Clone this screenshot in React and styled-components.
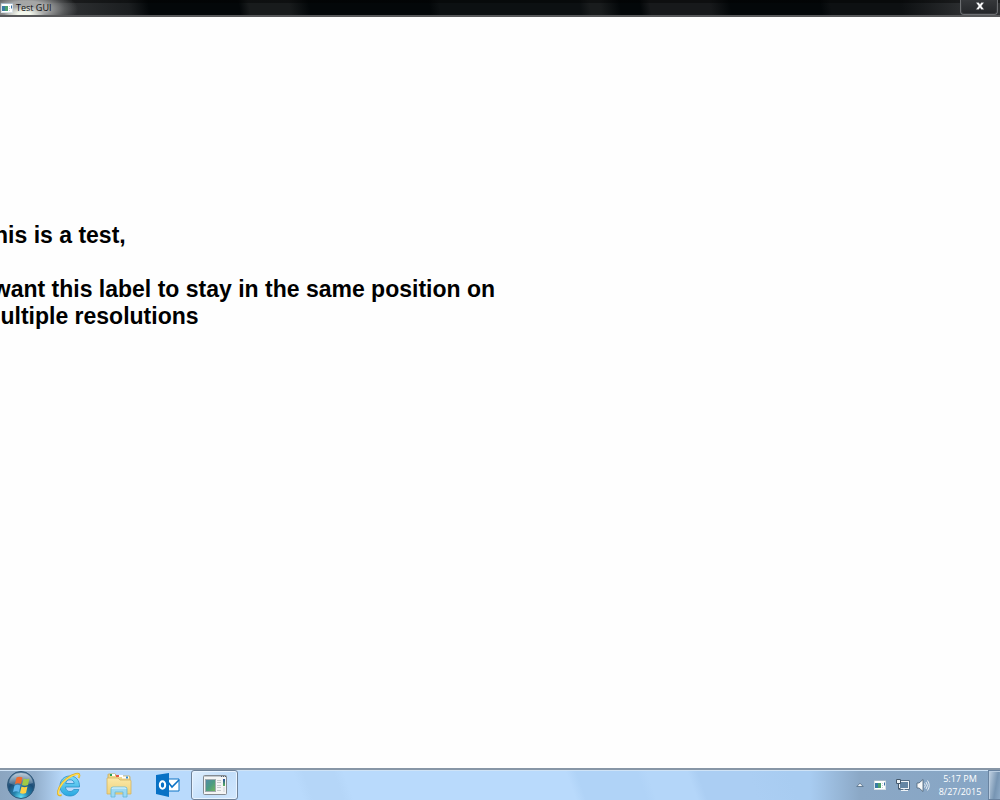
import React from 'react';
import styled, { createGlobalStyle } from 'styled-components';

const GlobalStyle = createGlobalStyle`
  * {
    box-sizing: border-box;
  }

  body {
    margin: 0;
    background: #fefefe;
    font-family: "Open Sans", "Noto Sans", sans-serif;
  }
`;

const Desktop = styled.div`
  min-height: 100vh;
  display: flex;
  flex-direction: column;
  overflow: hidden;
`;

const TitleBar = styled.header`
  height: 17px;
  display: flex;
  align-items: flex-start;
  justify-content: space-between;
  border-bottom: 2px solid #57585a;
  background:
    linear-gradient(180deg, #00000066 0 3px, transparent 3px),
    linear-gradient(80deg, #303234 6%, #1b1e20 13%, transparent 15% 24%, #181b1c 25% 29%, transparent 31% 43%, #0c1012 44% 58%, #191c1d 59% 60%, transparent 62% 64%, #17191b 65% 71%, transparent 73% 82%, #0d1012 83% 90%, #303234 97%),
    #030709;
`;

const Caption = styled.div`
  height: 15px;
  width: 80px;
  display: flex;
  align-items: center;
  gap: 3px;
  padding: 1px 0 0 1px;
  background:
    radial-gradient(ellipse 20px 8px at 24px 14px, #f3f7ec 30%, transparent),
    radial-gradient(ellipse 52px 20px at 26px 9px, #a5a6a6 40%, #77797a88 75%, transparent);
`;

const Title = styled.h1`
  margin: 0;
  font-size: 9px;
  line-height: 14px;
  font-weight: 400;
  color: #101113;
  white-space: nowrap;
`;

const CloseButton = styled.button`
  width: 38px;
  height: 15px;
  margin-right: 2px;
  padding: 0 0 2px 2px;
  display: flex;
  align-items: center;
  justify-content: center;
  border: 1px solid #6d6f72;
  border-top: 0;
  border-radius: 0 0 4px 4px;
  background: linear-gradient(#36383b, #242629);
  box-shadow: inset 0 0 0 1px #36383b;
`;

const Client = styled.main`
  flex: 1;
  padding-top: 205px;
  background: #fefefe;
`;

const Label = styled.p`
  max-width: 530px;
  margin: 0 0 0 -20px;
  font-family: "Liberation Sans", Arial, sans-serif;
  font-size: 23px;
  line-height: 27px;
  font-weight: 700;
  color: #000;
  white-space: pre-line;
`;

const TaskBar = styled.footer`
  height: 32px;
  display: flex;
  align-items: stretch;
  border-top: 2px solid #8796a6;
  box-shadow: inset 0 1px #cfe3f6;
  background:
    linear-gradient(90deg, #8ba5c0 0, #93afcc 35px, transparent 64px),
    linear-gradient(90deg, transparent 81%, #8ba8c6 86%, #86a5c4),
    linear-gradient(70deg, transparent 30%, #b5d6f8 31% 34%, transparent 35% 57%, #b0d3f7 58% 64%, #b4d6f9 65% 69%, #abcef3 70% 75%, #a8ccf1 79%),
    #b9dafc;
`;

const Launchers = styled.nav`
  display: flex;
  flex: 1;
`;

const TaskButton = styled.button`
  width: ${props => props.$width || 48}px;
  padding: 0;
  display: flex;
  align-items: center;
  justify-content: center;
  border: 1px solid ${props => (props.$active ? '#6f8298' : 'transparent')};
  border-radius: 3px;
  background: ${props => (props.$active ? 'linear-gradient(135deg, #e0effe, #c2defa 55%, #d3e8fd)' : 'transparent')};
  box-shadow: ${props => (props.$active ? 'inset 0 0 0 1px #e9f4ff' : 'none')};
`;

const Tray = styled.div`
  display: flex;
  align-items: center;
`;

const TrayButton = styled.button`
  width: ${props => props.$width}px;
  height: 100%;
  padding: 0;
  display: flex;
  align-items: center;
  justify-content: center;
  border: 0;
  background: none;
`;

const Clock = styled.time`
  width: 56px;
  font-size: 9px;
  line-height: 13px;
  text-align: center;
  color: #fff;
  white-space: pre-line;
`;

const ShowDesktop = styled.button`
  width: 12px;
  height: 100%;
  padding: 0;
  border: 1px solid #6983a0;
  border-right: 0;
  background: linear-gradient(100deg, #c3d3e3, #7795b3 60%, #8eabc8);
  box-shadow: inset 1px 1px #b8cce0;
`;

const CloseIcon = () => (
  <svg width="10" height="8" viewBox="0 0 10 8" aria-hidden="true">
    <path d="M1 .5h2.7L5 2.3 6.3.5H9L6.5 4 9 7.5H6.3L5 5.700 3.700 7.500H1L3.500 4Z" fill="#fff" stroke="#55585d" strokeWidth=".4" />
  </svg>
);

const AppIcon = () => (
  <svg width="24" height="20" viewBox="0 0 24 20" aria-hidden="true">
    <defs>
      <linearGradient id="appPanel" x2="1" y2="1">
        <stop stopColor="#5488a8" />
        <stop offset=".5" stopColor="#4b9b81" />
        <stop offset="1" stopColor="#73b65a" />
      </linearGradient>
      <linearGradient id="appMeter" x2="0" y2="1">
        <stop stopColor="#234b9b" />
        <stop offset="1" stopColor="#5bb65b" />
      </linearGradient>
    </defs>
    <rect x=".5" y=".5" width="23" height="19" rx="1" fill="#f4f5f5" stroke="#858b91" />
    <path d="M1 1h22v1H1z" fill="#c3c9ce" />
    <path d="M18 1.500h1m1 0h1m1 0h1" stroke="#526170" />
    <rect x="2.500" y="4.500" width="10" height="12" fill="url(#appPanel)" stroke="#a1acb0" />
    <path d="M14 5.500h4m-4 2h4m-4 3h4m-4 2h4m-4 3h4" stroke="#c5c9cc" />
    <path d="M20 4h2v7h-2z" fill="url(#appMeter)" />
    <path d="M20 12h2v5h-2z" fill="#e1e4e6" />
  </svg>
);

const SmallAppIcon = () => (
  <svg width="12" height="10" viewBox="0 0 12 10" aria-hidden="true">
    <rect x=".5" y=".5" width="11" height="9" fill="#fff" stroke="#d7e0e5" />
    <path d="M0 .5h12" stroke="#a9bac7" />
    <path d="M1 3h3v5H1z" fill="#397ba4" />
    <path d="M4 3h3v5H4z" fill="#4ca06d" />
    <path d="M8 3.500h1m-1 2h1m-1 2h1" stroke="#c6ced3" />
    <path d="M10 2.500h1v3h-1z" fill="#3b70a6" />
  </svg>
);

const StartIcon = () => (
  <svg width="30" height="30" viewBox="0 0 30 30" aria-hidden="true">
    <defs>
      <radialGradient id="orb" cx=".5" cy=".95" r=".9">
        <stop stopColor="#61e2f8" />
        <stop offset=".3" stopColor="#2583ad" />
        <stop offset=".65" stopColor="#1c4d77" />
        <stop offset="1" stopColor="#597f9f" />
      </radialGradient>
      <linearGradient id="shine" x2="0" y2="1">
        <stop stopColor="#fff" stopOpacity=".6" />
        <stop offset="1" stopColor="#fff" stopOpacity=".15" />
      </linearGradient>
    </defs>
    <circle cx="15" cy="15" r="13.500" fill="url(#orb)" stroke="#2f587a" />
    <path d="M3 13C4 6 9 3 15 3s11 3 12 10c-8 3-16 4-24 0Z" fill="url(#shine)" />
    <path d="M10.500 7.500c2-1 4-1 6 0l-1.500 6.500c-2-1-4-1-6 0Z" fill="#f06b30" />
    <path d="M17.500 8.500c2 1 4 1 6 0L22 15c-2 1-4 1-6 0Z" fill="#a1ca45" />
    <path d="M8.500 15.500c2-1 4-1 6 0L13 22c-2-1-4-1-6 0Z" fill="#63b8ee" />
    <path d="M15.500 16.500c2 1 4 1 6 0L20 23c-2 1-4 1-6 0Z" fill="#ffd143" />
  </svg>
);

const ExplorerEIcon = () => (
  <svg width="26" height="26" viewBox="0 0 26 26" aria-hidden="true">
    <defs>
      <linearGradient id="blueE" x2="0" y2="1">
        <stop stopColor="#7edbf8" />
        <stop offset="1" stopColor="#28a9e1" />
      </linearGradient>
    </defs>
    <path
      d="M23.500 15H9.500c.2 3 2 4.500 4.500 4.500 1.800 0 3-.7 3.700-2h5.200c-1.300 4-4.500 6.500-9 6.500C8 24 4 20 4 14S8 4 14 4c6.200 0 9.800 4.500 9.500 11ZM9.700 11.500h8.500C18 9.200 16.500 7.800 14 7.800s-3.900 1.400-4.300 3.700Z"
      fill="url(#blueE)"
      fillRule="evenodd"
      stroke="#2a8fc6"
      strokeWidth=".8"
    />
    <path d="M22.500 6C24.500 2.500 23 1.300 20 2 14 3.300 6.500 9 3.500 15.500c-2.500 5.500-2 8.500 2 7.500" fill="none" stroke="#dcaa25" strokeWidth="2" />
    <path d="M22.500 5.500C24 2.500 22.700 1.700 20 2.300 14 3.700 7 9.200 3.800 15.500c-2.300 5-1.900 7.700 1.200 7" fill="none" stroke="#ffdf50" strokeWidth="1.200" />
  </svg>
);

const FolderIcon = () => (
  <svg width="26" height="26" viewBox="0 0 26 26" aria-hidden="true">
    <defs>
      <linearGradient id="folder" x2="0" y2="1">
        <stop stopColor="#fbe9a8" />
        <stop offset="1" stopColor="#efd27b" />
      </linearGradient>
    </defs>
    <path d="M2 5V2.500Q2 2 3 2h6q1 0 1 2h13q1 0 1 1v13H2Z" fill="#edd68c" stroke="#c6a854" strokeWidth=".8" />
    <path d="M4 3h5M10 4h7M16 5.500h7" stroke="#fff" strokeWidth="2" />
    <path d="M4 3h2" stroke="#27a152" strokeWidth="2" />
    <path d="M10 4h3" stroke="#e05545" strokeWidth="2" />
    <path d="M20 5.500h2" stroke="#318bd4" strokeWidth="2" />
    <path d="M1 6h11l2 2h10q1 0 1 1v13H1Z" fill="url(#folder)" stroke="#d3b462" strokeWidth=".8" />
    <path d="M5 25v-8q0-2 2-2h12q2 0 2 2v8h-4v-5H9v5Z" fill="#9dd9f2" stroke="#62b6d8" strokeWidth=".8" />
    <path d="M6 17q0-1 1-1h12q1 0 1 1" fill="none" stroke="#e1f8ff" />
  </svg>
);

const OutlookIcon = () => (
  <svg width="26" height="26" viewBox="0 0 26 26" aria-hidden="true">
    <path d="M13 7h12v12H13Z" fill="#fff" stroke="#0b72c5" />
    <path d="m14 10 4 5 7-7" fill="none" stroke="#0b72c5" strokeWidth="1.600" />
    <path d="m2 3 13-2v24L2 22Z" fill="#0871c5" />
    <ellipse cx="8.500" cy="13" rx="2.700" ry="3.700" fill="none" stroke="#fff" strokeWidth="2" />
  </svg>
);

const ArrowIcon = () => (
  <svg width="8" height="6" viewBox="0 0 8 6" aria-hidden="true">
    <path d="M.8 4.500 4 1.200l3.200 3.300Z" fill="#f4f7fa" stroke="#506982" strokeWidth=".8" />
  </svg>
);

const NetworkIcon = () => (
  <svg width="14" height="14" viewBox="0 0 14 14" aria-hidden="true">
    <rect x="3.500" y="3.500" width="9" height="7" fill="#6586a4" stroke="#34495e" strokeWidth="2.200" />
    <rect x="3.500" y="3.500" width="9" height="7" fill="#6586a4" stroke="#eef3f7" />
    <path d="M8 11v2M5 12.500h7" stroke="#eef3f7" />
    <path d="M.5 1.500h4v4h-4Z" fill="#eef3f7" stroke="#45596d" />
    <path d="M2.500 5v5.500h2" fill="none" stroke="#45596d" />
  </svg>
);

const SpeakerIcon = () => (
  <svg width="14" height="13" viewBox="0 0 14 13" aria-hidden="true">
    <path d="M1 4h2l4-3.500v12L3 9H1Z" fill="#f7f9fa" stroke="#4c6277" strokeWidth=".8" />
    <path d="M8.500 4.500q1.500 2 0 4M10 3q3 3.500 0 7M11.500 1.500q3.500 5 0 10" fill="none" stroke="#e8eff5" />
  </svg>
);

const App = () => (
  <Desktop>
    <GlobalStyle />
    <TitleBar>
      <Caption>
        <SmallAppIcon />
        <Title>Test GUI</Title>
      </Caption>
      <CloseButton type="button" aria-label="Close">
        <CloseIcon />
      </CloseButton>
    </TitleBar>
    <Client>
      <Label>
        {'This is a test,\n\nI want this label to stay in the same position on multiple resolutions'}
      </Label>
    </Client>
    <TaskBar>
      <Launchers aria-label="Taskbar">
        <TaskButton type="button" $width={42} aria-label="Start">
          <StartIcon />
        </TaskButton>
        <TaskButton type="button" $width={54} aria-label="Internet Explorer">
          <ExplorerEIcon />
        </TaskButton>
        <TaskButton type="button" $width={46} aria-label="File Explorer">
          <FolderIcon />
        </TaskButton>
        <TaskButton type="button" $width={49} aria-label="Outlook">
          <OutlookIcon />
        </TaskButton>
        <TaskButton type="button" $width={47} $active aria-label="Test GUI">
          <AppIcon />
        </TaskButton>
      </Launchers>
      <Tray>
        <TrayButton type="button" $width={16} aria-label="Show hidden icons">
          <ArrowIcon />
        </TrayButton>
        <TrayButton type="button" $width={23} aria-label="Test GUI tray icon">
          <SmallAppIcon />
        </TrayButton>
        <TrayButton type="button" $width={23} aria-label="Network">
          <NetworkIcon />
        </TrayButton>
        <TrayButton type="button" $width={18} aria-label="Volume">
          <SpeakerIcon />
        </TrayButton>
        <Clock dateTime="2015-08-27T17:17">{'5:17 PM\n8/27/2015'}</Clock>
        <ShowDesktop type="button" aria-label="Show desktop" />
      </Tray>
    </TaskBar>
  </Desktop>
);

export default App;
